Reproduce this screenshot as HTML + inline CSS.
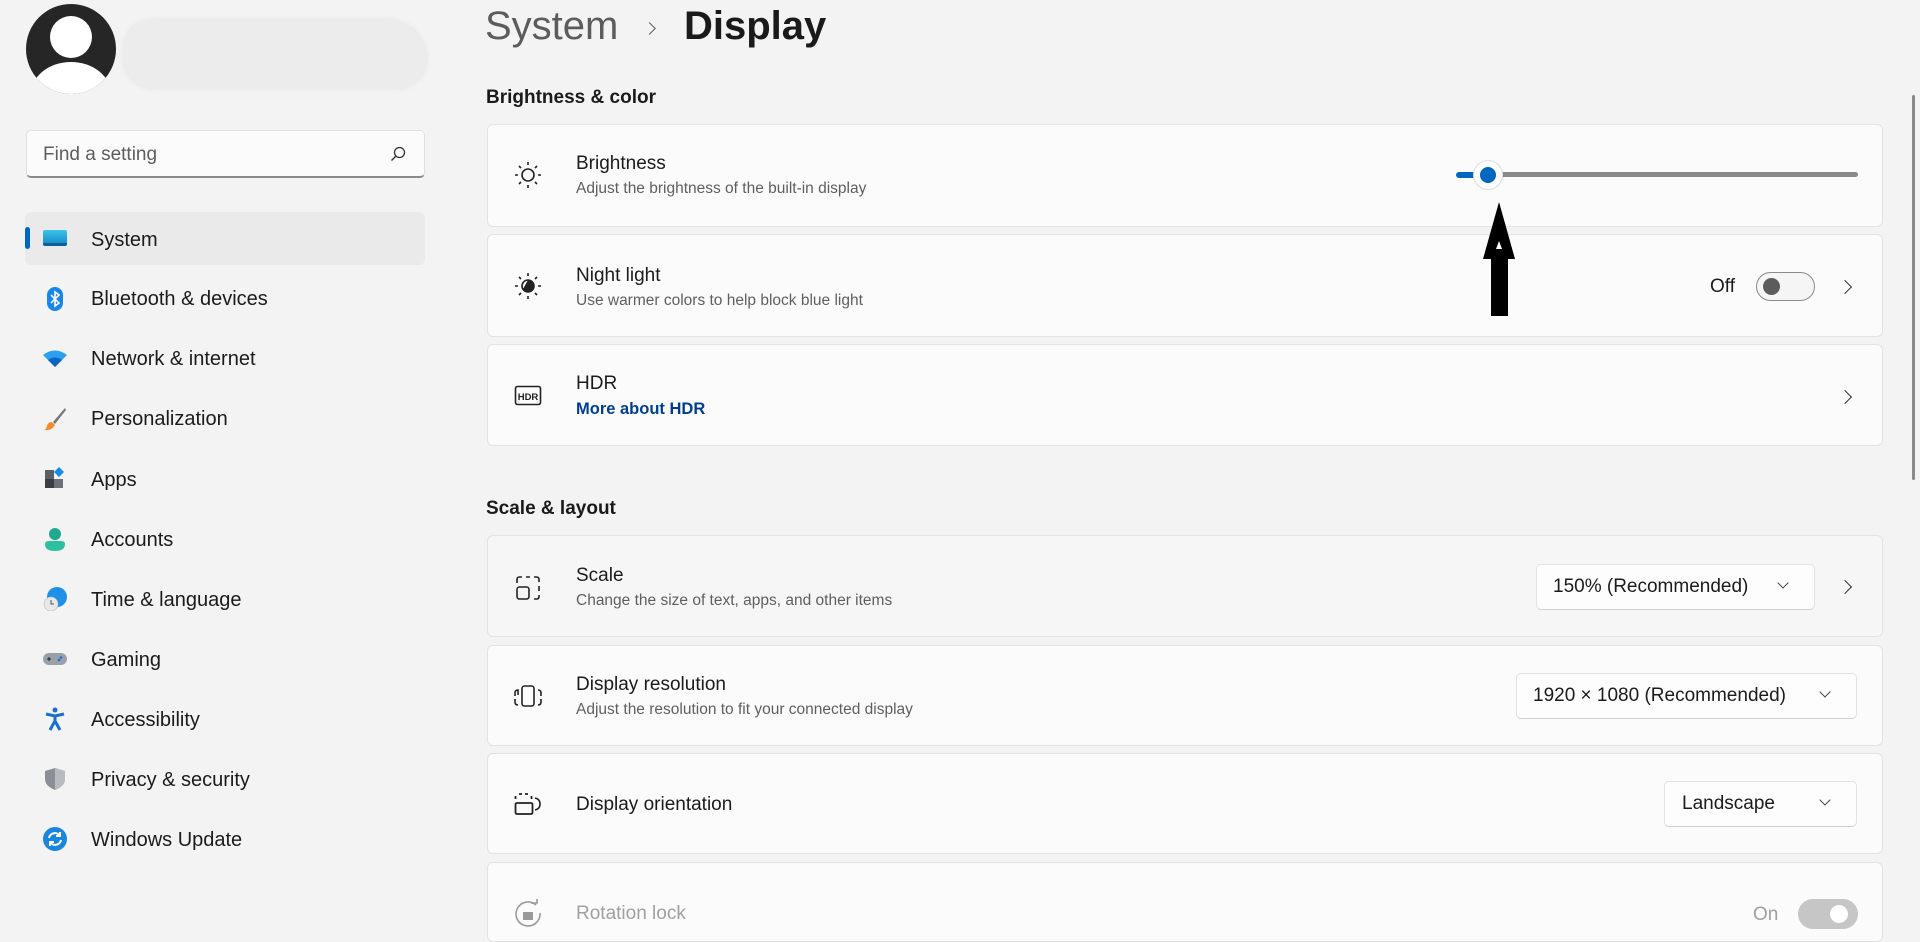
<!DOCTYPE html>
<html><head><meta charset="utf-8"><style>
*{box-sizing:border-box;margin:0;padding:0}
body{width:1920px;height:925px;overflow:hidden;background:#f3f3f3;font-family:"Liberation Sans",sans-serif;color:#1a1a1a;position:relative}
.abs{position:absolute}
.nav{position:absolute;left:91px;font-size:20px;color:#1b1b1b}
.ni{position:absolute;left:43px;width:24px;height:24px}
.card{position:absolute;left:487px;width:1396px;background:#fbfbfb;border:1px solid #e3e3e3;border-radius:6px}
.t{position:absolute;left:88px;font-size:19px;color:#1b1b1b}
.s{position:absolute;left:88px;font-size:15.5px;color:#5f5f5f}
.ic{position:absolute;left:26px;width:28px;height:28px}
.dd{position:absolute;background:#fdfdfd;border:1px solid #e2e2e2;border-bottom-color:#cfcfcf;border-radius:5px;font-size:19px;color:#1b1b1b;padding-left:16px;line-height:44px}
.chev{position:absolute;width:10px;height:10px;border-right:1.6px solid #333;border-top:1.6px solid #333;transform:rotate(45deg)}
.dchev{position:absolute;width:8px;height:8px;border-right:1.4px solid #444;border-bottom:1.4px solid #444;transform:rotate(45deg)}
</style></head><body>
<!-- avatar -->
<svg class="abs" style="left:26px;top:4px" width="90" height="90" viewBox="0 0 90 90"><defs><clipPath id="c"><circle cx="45" cy="45" r="45"/></clipPath></defs><circle cx="45" cy="45" r="45" fill="#262626"/><g clip-path="url(#c)" fill="#fff"><circle cx="45" cy="33" r="21"/><ellipse cx="45" cy="90" rx="40" ry="32"/></g></svg>
<div class="abs" style="left:124px;top:20px;width:302px;height:68px;background:#ececec;border-radius:30px 40px 30px 30px;box-shadow:0 0 6px #e0e0e0"></div>
<!-- search -->
<div class="abs" style="left:26px;top:130px;width:399px;height:48px;background:#fbfbfb;border:1px solid #e0e0e0;border-bottom:2px solid #8a8a8a;border-radius:5px"></div>
<div class="abs" style="left:43px;top:144px;font-size:19px;color:#5d5d5d">Find a setting</div>
<svg class="abs" style="left:390px;top:146px" width="16" height="16" viewBox="0 0 16 16"><circle cx="9.5" cy="6.5" r="5" fill="none" stroke="#333" stroke-width="1.3"/><path d="M6 10L1.5 14.5" stroke="#333" stroke-width="1.4"/></svg>
<!-- nav -->
<div class="abs" style="left:25px;top:212px;width:400px;height:53px;background:#eaeaea;border-radius:6px"></div>
<div class="abs" style="left:25px;top:227px;width:5px;height:22px;background:#0067c0;border-radius:3px"></div>
<div class="ni" style="top:230px;height:16px;background:linear-gradient(#3cc4e8,#1a8fc9);border-radius:2px;border-bottom:3px solid #0e5f99"></div>
<div class="nav" style="top:229px">System</div>
<svg class="ni" style="top:287px" viewBox="0 0 24 24"><rect x="4" y="0" width="16" height="24" rx="8" fill="#1a86e8"/><path d="M8 8l8 8-4 3V5l4 3-8 8" fill="none" stroke="#fff" stroke-width="1.6"/></svg>
<div class="nav" style="top:288px">Bluetooth &amp; devices</div>
<svg class="ni" style="top:349px" viewBox="0 0 24 24"><path d="M0 6Q12-3 24 6L12 18Z" fill="#2aa0ee"/><path d="M5 11Q12 6 19 11L12 18Z" fill="#0b63c4"/></svg>
<div class="nav" style="top:348px">Network &amp; internet</div>
<svg class="ni" style="top:407px" viewBox="0 0 24 24"><path d="M22 1L10 15l2 2L23 3z" fill="#777"/><path d="M9 15q-4 0-5 4t-3 4q8 1 11-5z" fill="#f28a2e"/></svg>
<div class="nav" style="top:408px">Personalization</div>
<svg class="ni" style="top:467px" viewBox="0 0 24 24"><rect x="2" y="3" width="9" height="9" fill="#5a5f66"/><rect x="2" y="12" width="9" height="9" fill="#3a3d42"/><rect x="11" y="12" width="9" height="9" fill="#6c7178"/><path d="M16 0l5 5-5 5-5-5z" fill="#1a8ae8"/></svg>
<div class="nav" style="top:469px">Apps</div>
<svg class="ni" style="top:527px" viewBox="0 0 24 24"><circle cx="12" cy="7" r="6" fill="#22a88e"/><path d="M2 17q0-3 4-3h12q4 0 4 3 0 7-10 7T2 17z" fill="#2cc0a0"/></svg>
<div class="nav" style="top:529px">Accounts</div>
<svg class="ni" style="top:587px" viewBox="0 0 24 24"><circle cx="14" cy="10" r="10" fill="#1e90e8"/><circle cx="8" cy="17" r="7" fill="#e8e8e8" stroke="#bbb" stroke-width=".6"/><path d="M8 13v4h3" stroke="#555" fill="none"/></svg>
<div class="nav" style="top:589px">Time &amp; language</div>
<svg class="ni" style="top:648px" viewBox="0 0 24 24"><rect x="0" y="5" width="24" height="12" rx="6" fill="#9aa0a8"/><path d="M4 11h4M6 9v4" stroke="#222"/><circle cx="16" cy="12" r="1.3" fill="#1a6fd0"/><circle cx="18" cy="9.5" r="1.3" fill="#1a6fd0"/></svg>
<div class="nav" style="top:649px">Gaming</div>
<svg class="ni" style="top:707px" viewBox="0 0 24 24"><circle cx="12" cy="3" r="2.5" fill="#1a6fd0"/><path d="M3 7l9 2 9-2M12 9v5l-5 9M12 14l5 9" stroke="#1a6fd0" stroke-width="3" fill="none"/></svg>
<div class="nav" style="top:709px">Accessibility</div>
<svg class="ni" style="top:767px" viewBox="0 0 24 24"><path d="M12 1L2 4v8q0 7 10 11 10-4 10-11V4z" fill="#8a8f96"/><path d="M12 1v22q10-4 10-11V4z" fill="#b8bcc2"/></svg>
<div class="nav" style="top:769px">Privacy &amp; security</div>
<svg class="ni" style="top:827px" viewBox="0 0 24 24"><circle cx="12" cy="12" r="12" fill="#1a86e0"/><path d="M6 11a6 6 0 0 1 11-2M18 13a6 6 0 0 1-11 2" stroke="#fff" stroke-width="2" fill="none"/><path d="M17 5v4h-4M7 19v-4h4" stroke="#fff" stroke-width="2" fill="none"/></svg>
<div class="nav" style="top:829px">Windows Update</div>

<!-- header -->
<div class="abs" style="left:485px;top:4px;font-size:40px;color:#5c5c5c">System</div>
<div class="chev" style="left:645px;top:24px;width:9px;height:9px;border-color:#5c5c5c"></div>
<div class="abs" style="left:684px;top:4px;font-size:40px;color:#1a1a1a;font-weight:600">Display</div>
<div class="abs" style="left:486px;top:87px;font-size:19px;font-weight:600">Brightness &amp; color</div>

<div class="card" style="top:124px;height:103px">
 <svg class="ic" style="top:36px" viewBox="0 0 28 28"><circle cx="14" cy="14" r="6" fill="none" stroke="#222" stroke-width="1.6"/><path d="M14 1v3M14 24v3M1 14h3M24 14h3M5 5l2 2M21 21l2 2M23 5l-2 2M7 21l-2 2" stroke="#222" stroke-width="1.6"/></svg>
 <div class="t" style="top:28px">Brightness</div><div class="s" style="top:55px">Adjust the brightness of the built-in display</div>
</div>
<div class="abs" style="left:1456px;top:172px;width:30px;height:6px;background:#0067c0;border-radius:3px"></div>
<div class="abs" style="left:1500px;top:172px;width:358px;height:5px;background:#8a8a8a;border-radius:3px"></div>
<div class="abs" style="left:1473px;top:160px;width:30px;height:30px;border-radius:50%;background:#fff;border:1px solid #ddd"></div>
<div class="abs" style="left:1480px;top:167px;width:16px;height:16px;border-radius:50%;background:#0067c0"></div>

<div class="card" style="top:234px;height:103px">
 <svg class="ic" style="top:37px" viewBox="0 0 28 28"><circle cx="14" cy="14" r="6" fill="none" stroke="#222" stroke-width="1.6"/><path d="M14 8a6 6 0 0 1 0 12a6 6 0 0 1-5-3z" fill="#222"/><path d="M14 1v3M14 24v3M1 14h3M24 14h3M5 5l2 2M21 21l2 2M23 5l-2 2M7 21l-2 2" stroke="#222" stroke-width="1.6"/></svg>
 <div class="t" style="top:30px">Night light</div><div class="s" style="top:57px">Use warmer colors to help block blue light</div>
 <div class="abs" style="left:1222px;top:41px;font-size:19px">Off</div>
 <div class="abs" style="left:1268px;top:37px;width:59px;height:29px;border:1.5px solid #8a8a8a;border-radius:15px;background:#f5f5f5"></div>
 <div class="abs" style="left:1275px;top:43px;width:17px;height:17px;border-radius:50%;background:#5c5c5c"></div>
 <div class="chev" style="left:1352px;top:47px"></div>
</div>
<svg class="abs" style="left:1480px;top:200px;z-index:5" width="38" height="118"><path d="M19 2L35 59H28V116H11V59H3Z" fill="#000"/><path d="M19 41l3 8h-6z" fill="#fff"/></svg>
<div class="card" style="top:344px;height:102px">
 <svg class="ic" style="top:37px" viewBox="0 0 28 28"><rect x="1.5" y="4.5" width="25" height="18" rx="2" fill="none" stroke="#222" stroke-width="1.6"/><text x="14" y="18" text-anchor="middle" font-family="Liberation Sans" font-weight="700" font-size="9.5" fill="#222">HDR</text></svg>
 <div class="t" style="top:28px">HDR</div><div class="s" style="top:55px;color:#003e92;font-weight:700;font-size:16.5px">More about HDR</div>
 <div class="chev" style="left:1352px;top:47px"></div>
</div>

<div class="abs" style="left:486px;top:498px;font-size:19px;font-weight:600">Scale &amp; layout</div>
<div class="card" style="top:535px;height:102px;background:#f6f6f6">
 <svg class="ic" style="top:38px" viewBox="0 0 28 28"><rect x="3" y="13" width="12" height="12" rx="2.5" fill="none" stroke="#222" stroke-width="1.6"/><path d="M3 9V5.5Q3 3 5.5 3H8M12 3h4M20 3h2.5Q25 3 25 5.5V8M25 12v5M25 21v1.5Q25 25 22.5 25H20" fill="none" stroke="#222" stroke-width="1.6"/></svg>
 <div class="t" style="top:29px">Scale</div><div class="s" style="top:56px">Change the size of text, apps, and other items</div>
 <div class="dd" style="left:1048px;top:28px;width:279px;height:46px">150% (Recommended)</div>
 <div class="dchev" style="left:1291px;top:43px"></div>
 <div class="chev" style="left:1352px;top:46px"></div>
</div>
<div class="card" style="top:645px;height:101px">
 <svg class="ic" style="top:36px" viewBox="0 0 28 28"><rect x="8" y="4" width="12" height="20" rx="2.5" fill="none" stroke="#222" stroke-width="1.6"/><path d="M4 13V8Q1 8 1 11v3M1 17v3q0 3 3 3M24 8q3 0 3 3v3M27 17v3q0 3-3 3" fill="none" stroke="#222" stroke-width="1.6"/></svg>
 <div class="t" style="top:28px">Display resolution</div><div class="s" style="top:55px">Adjust the resolution to fit your connected display</div>
 <div class="dd" style="left:1028px;top:27px;width:341px;height:46px">1920 × 1080 (Recommended)</div>
 <div class="dchev" style="left:1333px;top:42px"></div>
</div>
<div class="card" style="top:753px;height:101px">
 <svg class="ic" style="top:36px" viewBox="0 0 28 28"><rect x="1.5" y="13" width="17" height="11" rx="1.5" fill="none" stroke="#222" stroke-width="1.8"/><path d="M1.5 9V6M5 4h3M11 4h3M17.5 6v3" stroke="#222" stroke-width="1.8"/><path d="M21 8q5 1 5 6t-5 6" fill="none" stroke="#222" stroke-width="1.6"/></svg>
 <div class="t" style="top:40px">Display orientation</div>
 <div class="dd" style="left:1176px;top:27px;width:193px;height:46px;padding-left:17px">Landscape</div>
 <div class="dchev" style="left:1333px;top:42px"></div>
</div>
<div class="card" style="top:862px;height:80px">
 <svg class="ic" style="top:36px" viewBox="0 0 28 28"><path d="M22 6A12 12 0 1 0 26 14" fill="none" stroke="#9a9a9a" stroke-width="1.6"/><path d="M17 4h6V0" fill="none" stroke="#9a9a9a" stroke-width="1.6"/><rect x="9" y="13" width="10" height="8" fill="#9a9a9a"/></svg>
 <div class="t" style="top:40px;color:#a0a0a0">Rotation lock</div>
 <div class="abs" style="left:1265px;top:41px;font-size:19px;color:#a0a0a0">On</div>
 <div class="abs" style="left:1310px;top:36px;width:60px;height:30px;border-radius:15px;background:#c6c6c6"></div>
 <div class="abs" style="left:1342px;top:42px;width:18px;height:18px;border-radius:50%;background:#fff"></div>
</div>
<div class="abs" style="left:1912px;top:95px;width:3px;height:385px;background:#8a8a8a;border-radius:2px"></div>
</body></html>
